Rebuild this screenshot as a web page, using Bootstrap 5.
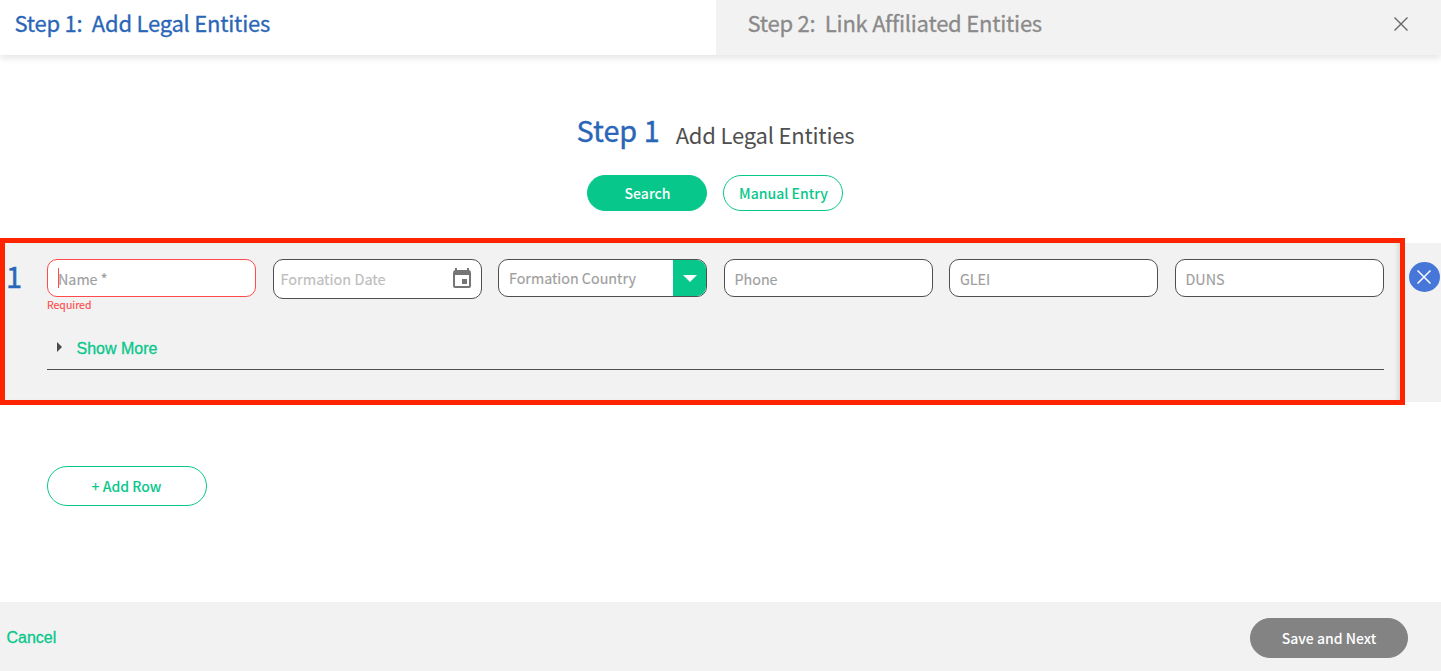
<!DOCTYPE html>
<html lang="en">
<head>
  <meta charset="UTF-8" />
  <meta name="viewport" content="width=device-width, initial-scale=1.0"/>
  <title>Add Legal Entities</title>
  <link href="https://cdn.jsdelivr.net/npm/bootstrap@5.3.3/dist/css/bootstrap.min.css" rel="stylesheet" />
  <style>
    body {
      font-family: "Noto Sans CJK SC", "Noto Sans", sans-serif;
      color: #4f4f4f;
      height: 671px;
      overflow: hidden;
    }
    .step-header {
      height: 55px;
      box-shadow: 0 4px 6px rgba(0, 0, 0, .09);
    }
    .step-tab {
      font-size: 22px;
      letter-spacing: -.23px;
      line-height: 45px;
      white-space: pre;
      -webkit-text-stroke: .3px currentColor;
    }
    .step-current {
      width: 716px;
      padding-left: 14.5px;
      color: #2a66b8;
    }
    .step-next {
      padding-left: 31.5px;
      padding-right: 33px;
      background: #f2f2f2;
      color: #8a8a8a;
    }
    .title-area {
      height: 188px;
      padding: 52px 11px 0 0;
    }
    .title-line {
      height: 44px;
      padding-left: 1px;
    }
    .title-step {
      font-size: 28.8px;
      line-height: 46px;
      color: #2a66b8;
      -webkit-text-stroke: .4px currentColor;
    }
    .title-name {
      font-size: 22px;
      letter-spacing: -.2px;
      line-height: 44px;
      padding-top: 5px;
    }
    .pill {
      font-size: 14px;
      font-weight: 500;
      border-radius: 20px;
      line-height: 34px;
      padding: 0;
      --bs-btn-color: #08c78b;
      --bs-btn-border-color: #08c78b;
    }
    .pill-mode {
      width: 120px;
      height: 36px;
      padding-left: 1px;
    }
    .pill-fill {
      --bs-btn-color: #fff;
      background: #08c78b;
    }
    .entity-band {
      height: 159px;
      background: #f2f2f2;
      padding: 16px 1px 0 6px;
    }
    .entity-number {
      width: 41px;
      font-size: 29px;
      line-height: 33px;
      color: #2a66b8;
      -webkit-text-stroke: .4px currentColor;
    }
    .entity-form {
      width: 1337px;
    }
    .field-grid {
      display: grid;
      grid-template-columns: repeat(6, 209.450px);
    }
    .field-box {
      height: 38px;
      border: 1px solid #4f4f4f;
      border-radius: 10px;
      background: #fff;
      font-size: 14.3px;
      line-height: 37px;
      color: #9e9e9e;
      padding-left: 10px;
      overflow: hidden;
      -webkit-text-stroke: .15px currentColor;
    }
    .field-date {
      height: 40px;
      color: #bdbdbd;
      padding-left: 7px;
      padding-right: 8px;
    }
    .field-date span {
      font-size: 14.5px;
      padding-bottom: 1px;
    }
    .field-country {
      line-height: 36px;
    }
    .field-error {
      border-color: #ff4b4b;
    }
    .field-error span {
      padding-top: 1px;
    }
    .caret {
      width: 1px;
      height: 20px;
      background: #ff4b4b;
      margin-right: -1px;
    }
    .error-text {
      font-size: 10.5px;
      line-height: 16px;
      color: #ff4b4b;
      -webkit-text-stroke: .15px currentColor;
    }
    .drop-btn {
      width: 33px;
      background: #08c78b;
    }
    .show-more {
      height: 43px;
      margin-top: 14px;
      border-bottom: 1px solid #4f4f4f;
      padding-left: 9px;
    }
    .show-more svg {
      margin-bottom: 2px;
    }
    .plain-link {
      font-family: "Liberation Sans", Arial, sans-serif;
      font-size: 16px;
      line-height: 20px;
      color: #08c78b;
      -webkit-text-stroke: .3px #08c78b;
    }
    .show-more .plain-link {
      margin-left: 14.5px;
      padding-top: 2px;
    }
    .remove-btn {
      width: 31px;
      height: 30px;
      margin-top: 3px;
      padding-right: 1px;
      background: #4677d8;
    }
    /* red frame that lies over the entity row */
    .highlight-frame {
      left: 0;
      top: -5px;
      width: 1405px;
      height: 167px;
      border: 5px solid #ff2400;
      box-shadow: inset -5px 0 5px -3px rgba(0, 0, 0, .12);
    }
    .add-area {
      height: 200px;
      padding: 64px 0 0 47px;
    }
    .pill-add {
      width: 160px;
      height: 40px;
      line-height: 38px;
      padding-right: 1px;
    }
    .action-bar {
      height: 69px;
      background: #f2f2f2;
      padding: 2px 33px 0 6.5px;
    }
    .pill-save {
      width: 158px;
      height: 40px;
      line-height: 38px;
      --bs-btn-color: #fff;
      --bs-btn-border-color: #838383;
      background: #838383;
    }
  </style>
</head>
<body>

  <!-- Step tabs -->
  <header class="step-header d-flex position-relative">
    <div class="step-tab step-current">Step 1:  Add Legal Entities</div>
    <div class="step-tab step-next flex-grow-1 d-flex justify-content-between">
      <span>Step 2:  Link Affiliated Entities</span>
      <svg class="mt-3" width="15" height="16" viewBox="0 0 15 16" fill="none" stroke="#666" stroke-width="1.4"><path d="M1.500 1.500l13 13M14.500 1.500l-13 13"/></svg>
    </div>
  </header>

  <section class="title-area">
    <div class="title-line d-flex justify-content-center">
      <span class="title-step me-3">Step 1</span>
      <span class="title-name">Add Legal Entities</span>
    </div>
    <div class="d-flex justify-content-center gap-3 mt-4">
      <button class="btn pill pill-mode pill-fill">Search</button>
      <button class="btn pill pill-mode">Manual Entry</button>
    </div>
  </section>

  <!-- Entity row -->
  <section class="entity-band d-flex align-items-start position-relative">
    <div class="entity-number">1</div>
    <div class="entity-form">
      <div class="field-grid justify-content-between align-items-start">
        <div>
          <div class="field-box field-error d-flex align-items-center"><i class="caret"></i><span>Name *</span></div>
          <div class="error-text">Required</div>
        </div>
        <div class="field-box field-date d-flex align-items-center justify-content-between">
          <span>Formation Date</span>
          <svg width="22" height="24" viewBox="0 0 22 24" fill="#757575"><path fill-rule="evenodd" d="M4 1h2v2h10V1h2v2a3 3 0 0 1 2 3v13a2 2 0 0 1-2 2H4a2 2 0 0 1-2-2V6a3 3 0 0 1 2-3zM4 8v11h14V8z"/><path d="M11 12h5v5h-5z"/></svg>
        </div>
        <div class="field-box field-country d-flex justify-content-between">
          <span>Formation Country</span>
          <div class="drop-btn d-flex align-items-center justify-content-center">
            <svg width="14" height="7" viewBox="0 0 14 7" fill="#fff"><path d="M0 0h14L7 7z"/></svg>
          </div>
        </div>
        <div class="field-box">Phone</div>
        <div class="field-box">GLEI</div>
        <div class="field-box">DUNS</div>
      </div>
      <div class="show-more d-flex align-items-center">
        <svg width="6" height="10" viewBox="0 0 6 10" fill="#4a4a4a"><path d="M1 0l5 5-5 5z"/></svg>
        <span class="plain-link">Show More</span>
      </div>
    </div>
    <div class="remove-btn rounded-circle d-flex align-items-center justify-content-center ms-auto">
      <svg width="14" height="14" viewBox="0 0 14 14" fill="none" stroke="#fff" stroke-width="1.5"><path d="M.5 .5l13 13M13.500 .5l-13 13"/></svg>
    </div>
    <div class="highlight-frame position-absolute"></div>
  </section>

  <section class="add-area">
    <button class="btn pill pill-add">+ Add Row</button>
  </section>

  <footer class="action-bar d-flex align-items-center justify-content-between">
    <span class="plain-link">Cancel</span>
    <button class="btn pill pill-save">Save and Next</button>
  </footer>

  <script src="https://cdn.jsdelivr.net/npm/bootstrap@5.3.3/dist/js/bootstrap.bundle.min.js"></script>
</body>
</html>
